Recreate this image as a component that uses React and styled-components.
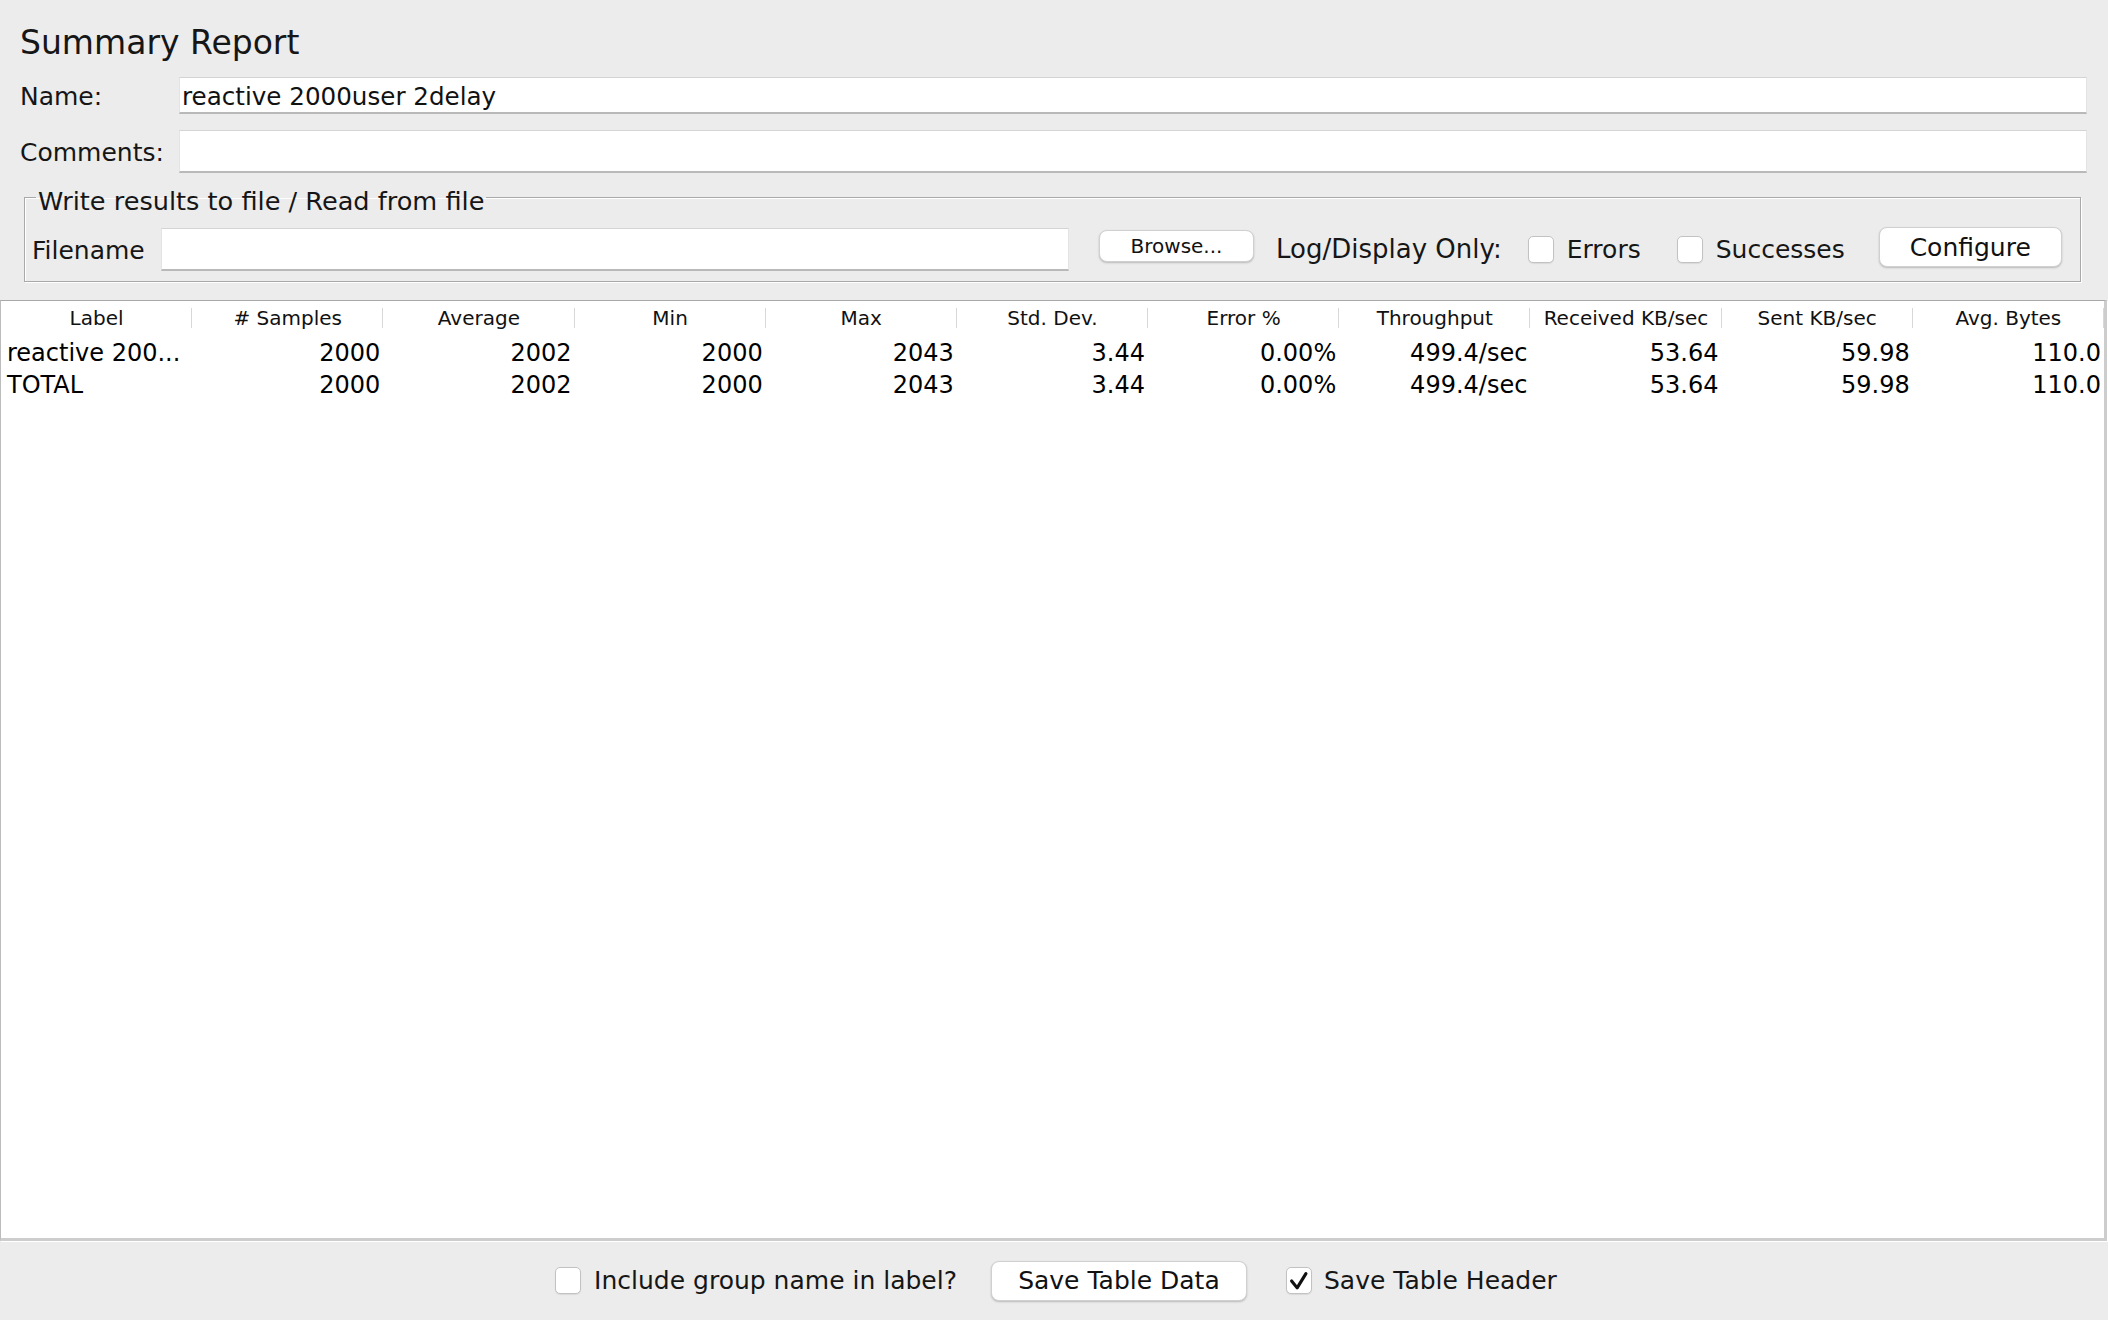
import styled, { createGlobalStyle } from 'styled-components';

const GlobalStyle = createGlobalStyle`
  html, body {
    margin: 0;
    padding: 0;
    background: #ececec;
  }
  body {
    font-family: 'DejaVu Sans', 'Liberation Sans', sans-serif;
    color: #111;
  }
`;

const Page = styled.div`
  width: 2108px;
  height: 1320px;
  display: flex;
  flex-direction: column;
  background: #ececec;
  overflow: hidden;
`;

const TopPanel = styled.div`
  padding: 24px 21px 0 20px;
`;

const Title = styled.h1`
  margin: 0;
  font-size: 33px;
  font-weight: normal;
  line-height: 38px;
  color: #161616;
`;

const FieldRow = styled.div`
  display: flex;
  align-items: center;
  margin-top: ${(p) => p.$gap}px;
`;

const FieldLabel = styled.label`
  flex: none;
  width: ${(p) => p.$w}px;
  padding-top: 2px;
  font-size: 25px;
  color: #161616;
`;

const TextBox = styled.div`
  flex: ${(p) => (p.$w ? 'none' : '1')};
  width: ${(p) => (p.$w ? `${p.$w}px` : 'auto')};
  height: ${(p) => p.$h}px;
  box-sizing: border-box;
  display: flex;
  align-items: center;
  padding: 3px 2px 0;
  background: #fff;
  border: 1px solid #e4e4e4;
  border-top-color: #d4d4d4;
  border-bottom: 2px solid #b9b9b9;
  font-size: 24.6px;
  color: #111;
`;

const GroupBox = styled.fieldset`
  margin: 6px 6px 0 4px;
  padding: 11px 18px 10px 7px;
  border: 1px solid #a9a9a9;
  box-shadow: inset 1px 1px 0 #fff, 1px 1px 0 #fff;
  min-width: 0;
`;

const GroupTitle = styled.legend`
  margin-left: 4px;
  padding: 7px 2px 0;
  font-size: 25.6px;
  line-height: 30px;
  color: #161616;
`;

const ToolRow = styled.div`
  display: flex;
  align-items: center;
`;

const Text = styled.span`
  flex: none;
  font-size: ${(p) => p.$fs || 25}px;
  margin-left: ${(p) => p.$ml || 0}px;
  color: #161616;
  white-space: nowrap;
`;

const Button = styled.button`
  flex: none;
  width: ${(p) => p.$w}px;
  height: ${(p) => p.$h}px;
  margin-left: ${(p) => p.$ml || 0}px;
  margin-bottom: ${(p) => p.$mb || 0}px;
  padding: 0;
  background: #fff;
  border: 1px solid #d0d0d0;
  border-radius: 8px;
  box-shadow: 0 1px 2px rgba(0, 0, 0, 0.22);
  font-family: inherit;
  font-size: ${(p) => p.$fs}px;
  color: #111;
  cursor: default;
`;

const Box = styled.span`
  flex: none;
  width: 26px;
  height: 27px;
  box-sizing: border-box;
  margin-left: ${(p) => p.$ml || 0}px;
  display: flex;
  align-items: center;
  justify-content: center;
  background: #fff;
  border: 1px solid #c2c2c2;
  border-radius: 5px;
  box-shadow: 0 1px 1px rgba(0, 0, 0, 0.08);
`;

const TablePanel = styled.div`
  flex: 1;
  margin: 18px 1px 0 0;
  background: #fff;
  border-top: 1px solid #a9a9a9;
  border-left: 1px solid #bcbcbc;
  border-right: 3px solid #cdcdcd;
  border-bottom: 3px solid #cdcdcd;
  box-shadow: 1px 1px 0 #fff;
`;

const Grid = styled.table`
  width: 100%;
  border-collapse: collapse;
  table-layout: fixed;
`;

const HeadCell = styled.th`
  position: relative;
  height: 36px;
  padding: 0 0 3px;
  box-sizing: border-box;
  font-size: 20px;
  font-weight: normal;
  text-align: center;
  color: #111;
  white-space: nowrap;

  &::after {
    content: '';
    position: absolute;
    right: 0;
    top: 7px;
    width: 1px;
    height: 20px;
    background: #d8d8d8;
  }
`;

const Cell = styled.td`
  height: 32px;
  padding: 0 ${(p) => (p.$left ? 0 : 3)}px 0 ${(p) => (p.$left ? 6 : 0)}px;
  font-size: 24px;
  text-align: ${(p) => (p.$left ? 'left' : 'right')};
  color: #000;
  white-space: nowrap;
  overflow: hidden;
`;

const BottomBar = styled.div`
  height: 79px;
  display: flex;
  align-items: center;
  justify-content: center;
  padding-left: 4px;
`;

const Check = () => (
  <svg width="26" height="27" viewBox="0 0 26 27">
    <polyline
      points="5,14 11,21.5 20.5,6"
      fill="none"
      stroke="#111"
      strokeWidth="3.4"
      strokeLinecap="round"
      strokeLinejoin="round"
    />
  </svg>
);

const columns = [
  'Label',
  '# Samples',
  'Average',
  'Min',
  'Max',
  'Std. Dev.',
  'Error %',
  'Throughput',
  'Received KB/sec',
  'Sent KB/sec',
  'Avg. Bytes',
];

const rows = [
  ['reactive 200...', '2000', '2002', '2000', '2043', '3.44', '0.00%', '499.4/sec', '53.64', '59.98', '110.0'],
  ['TOTAL', '2000', '2002', '2000', '2043', '3.44', '0.00%', '499.4/sec', '53.64', '59.98', '110.0'],
];

export default function App() {
  return (
    <Page>
      <GlobalStyle />
      <TopPanel>
        <Title>Summary Report</Title>
        <FieldRow $gap={15}>
          <FieldLabel $w={159}>Name:</FieldLabel>
          <TextBox $h={37}>reactive 2000user 2delay</TextBox>
        </FieldRow>
        <FieldRow $gap={16}>
          <FieldLabel $w={159}>Comments:</FieldLabel>
          <TextBox $h={43} />
        </FieldRow>
        <GroupBox>
          <GroupTitle>Write results to file / Read from file</GroupTitle>
          <ToolRow>
            <FieldLabel $w={129}>Filename</FieldLabel>
            <TextBox $w={908} $h={43} />
            <Button $w={155} $h={32} $fs={20} $ml={30} $mb={6}>
              Browse...
            </Button>
            <Text $ml={22} $fs={26}>Log/Display Only:</Text>
            <Box $ml={26} />
            <Text $ml={13}>Errors</Text>
            <Box $ml={36} />
            <Text $ml={13}>Successes</Text>
            <Button $w={183} $h={40} $fs={25} $ml={34} $mb={4}>
              Configure
            </Button>
          </ToolRow>
        </GroupBox>
      </TopPanel>
      <TablePanel>
        <Grid>
          <thead>
            <tr>
              {columns.map((c) => (
                <HeadCell key={c}>{c}</HeadCell>
              ))}
            </tr>
          </thead>
          <tbody>
            {rows.map((r, i) => (
              <tr key={i}>
                {r.map((v, j) => (
                  <Cell key={j} $left={j === 0}>
                    {v}
                  </Cell>
                ))}
              </tr>
            ))}
          </tbody>
        </Grid>
      </TablePanel>
      <BottomBar>
        <Box />
        <Text $ml={13}>Include group name in label?</Text>
        <Button $w={256} $h={40} $fs={25} $ml={34}>
          Save Table Data
        </Button>
        <Box $ml={39}>
          <Check />
        </Box>
        <Text $ml={12}>Save Table Header</Text>
      </BottomBar>
    </Page>
  );
}
